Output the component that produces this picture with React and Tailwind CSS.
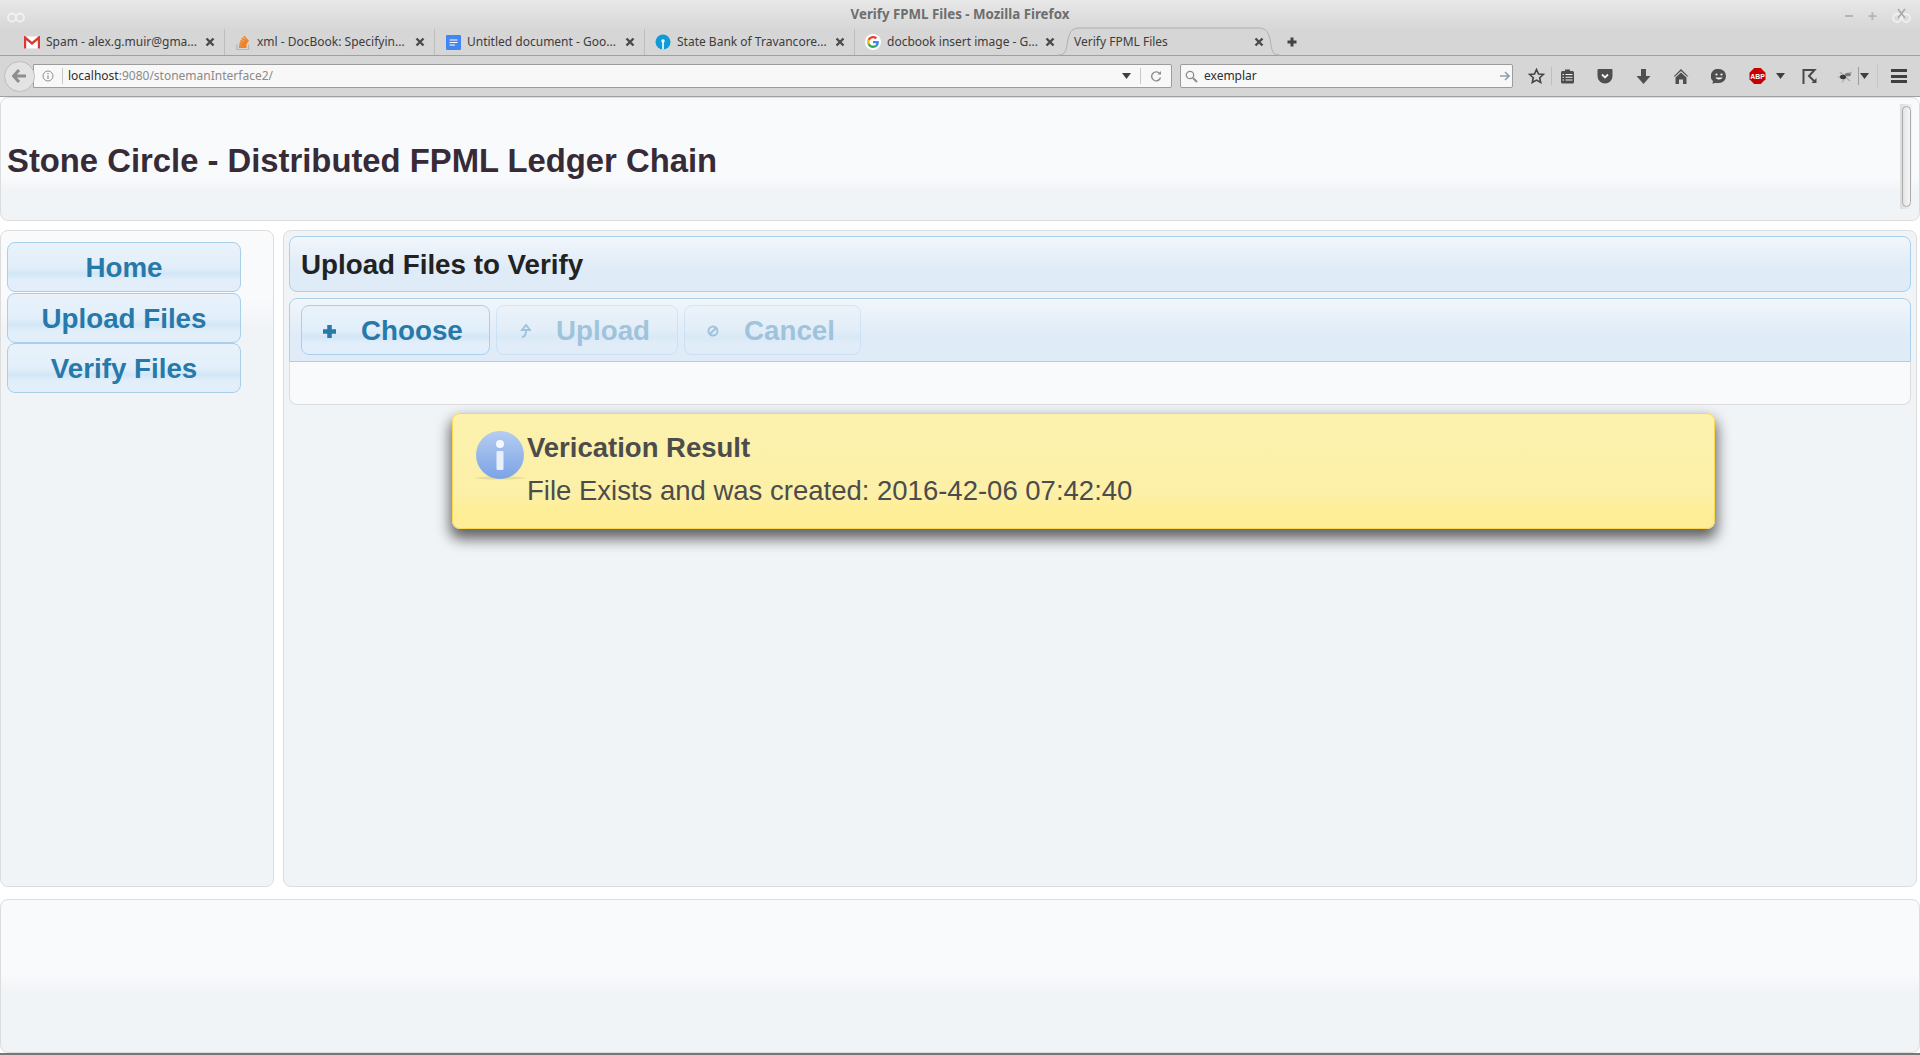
import React from 'react';

const sans = 'font-["Liberation_Sans",Arial,sans-serif]';
const ui = 'font-["Noto_Sans","Open_Sans",sans-serif]';
const btnBg = 'bg-[linear-gradient(to_bottom,#e9f2fa_0%,#e2effa_50%,#d2e6f6_64%,#e2effa_78%,#e2effa_100%)]';
const barBg = 'bg-[linear-gradient(to_bottom,#f1f6fb_0%,#dfebf7_60%,#dfebf7_100%)]';

const X = () => (
  <svg width="10" height="10" viewBox="0 0 10 10" className="shrink-0">
    <path d="M1.5 1.5 L8.5 8.5 M8.5 1.5 L1.5 8.5" stroke="#4a4a4a" strokeWidth="2.4" />
  </svg>
);

const GmailIcon = () => (
  <svg width="16" height="13" viewBox="0 0 16 13">
    <rect x="0.5" y="0.5" width="15" height="12" fill="#fff" stroke="#e8e8e8" />
    <path d="M1 12.5V1.5L8 7.5L15 1.5V12.5" fill="none" stroke="#d93a30" strokeWidth="2.4" />
  </svg>
);

const StackIcon = () => (
  <svg width="14" height="16" viewBox="0 0 14 16">
    <path d="M1 10.500v5h11.500v-5" fill="none" stroke="#b4b4b4" strokeWidth="1.200" />
    <path d="M3 13.200h7.500M3.200 11.200l7.300.5M3.600 8.800l7 1.500M4.400 6.400l6.600 3M5.800 4.200l5.800 4.200M7.800 2.200l4.600 5.400" stroke="#f48024" strokeWidth="1.700" />
  </svg>
);

const DocsIcon = () => (
  <svg width="15" height="15" viewBox="0 0 15 15">
    <rect width="15" height="15" rx="1" fill="#4285f4" />
    <path d="M3.500 5h8M3.500 7.500h8M3.500 10h5.500" stroke="#fff" strokeWidth="1" />
  </svg>
);

const SbiIcon = () => (
  <svg width="16" height="16" viewBox="0 0 16 16">
    <circle cx="8" cy="8" r="7.500" fill="#0f9bd7" />
    <circle cx="8" cy="7" r="1.700" fill="#fff" />
    <rect x="7.200" y="8" width="1.600" height="7.500" fill="#fff" />
  </svg>
);

const GoogleIcon = () => (
  <svg width="16" height="16" viewBox="0 0 48 48">
    <circle cx="24" cy="24" r="24" fill="#fff" />
    <path fill="#ea4335" d="M24 13c3 0 5.400 1 7.300 2.800l5.200-5.200C33.200 7.600 29 6 24 6 17 6 11 10 8 15.800l6.100 4.700C15.500 16.200 19.400 13 24 13z" />
    <path fill="#4285f4" d="M41.600 24.600c0-1.300-.1-2.500-.3-3.600H24v6.900h9.900c-.4 2.300-1.700 4.200-3.700 5.500l5.900 4.600c3.500-3.200 5.500-7.900 5.500-13.400z" />
    <path fill="#fbbc05" d="M14.100 27.500c-.4-1.100-.6-2.300-.6-3.500s.2-2.400.6-3.500L8 15.800C6.700 18.300 6 21 6 24s.7 5.700 2 8.200l6.100-4.700z" />
    <path fill="#34a853" d="M24 42c4.900 0 9-1.600 12.100-4.400l-5.900-4.600c-1.600 1.100-3.700 1.800-6.200 1.800-4.600 0-8.500-3.100-9.900-7.300L8 32.200C11 38 17 42 24 42z" />
  </svg>
);

const tabs = [
  { icon: <GmailIcon />, label: 'Spam - alex.g.muir@gma...' },
  { icon: <StackIcon />, label: 'xml - DocBook: Specifyin...' },
  { icon: <DocsIcon />, label: 'Untitled document - Goo...' },
  { icon: <SbiIcon />, label: 'State Bank of Travancore...' },
  { icon: <GoogleIcon />, label: 'docbook insert image - G...' },
];

const Tab = ({ icon, label, first }) => (
  <div className={`flex items-center h-[26px] pr-[9px] gap-[6px] shrink-0 ${first ? 'w-[224px] pl-[24px]' : 'w-[210px] pl-[10px] border-l border-[#bdbdbd]'}`}>
    <span className="w-[16px] flex justify-center shrink-0">{icon}</span>
    <span className="flex-1 text-[12px] text-[#3c3c3c] whitespace-nowrap">{label}</span>
    <X />
  </div>
);

const TitleBar = () => (
  <div className="relative h-[28px] flex items-center justify-center">
    <svg width="18" height="11" viewBox="0 0 18 11" className="absolute left-[7px] top-[12px]">
      <circle cx="5" cy="5.500" r="4" fill="none" stroke="#f2f2f2" strokeWidth="1.800" />
      <circle cx="13" cy="5.500" r="4" fill="none" stroke="#f2f2f2" strokeWidth="1.800" />
    </svg>
    <span className="text-[13.300px] font-bold text-[#6e6e6e] mt-[2px]">Verify FPML Files - Mozilla Firefox</span>
    <div className="absolute right-[9px] top-[8px] flex items-center gap-[15px] text-[#b5b5b5]">
      <span className="w-[8px] h-[2px] bg-[#b5b5b5]" />
      <span className="text-[16px] font-bold leading-[14px]">+</span>
      <svg width="19" height="16" viewBox="0 0 19 16">
        <circle cx="5" cy="10" r="4" fill="none" stroke="#f0f0f0" strokeWidth="1.800" />
        <circle cx="14" cy="10" r="4" fill="none" stroke="#f0f0f0" strokeWidth="1.800" />
        <path d="M6 1l7 9M13 1l-7 9" stroke="#a8a8a8" strokeWidth="1.500" />
      </svg>
    </div>
  </div>
);

const TabStrip = () => (
  <div className="relative h-[28px] flex items-start pt-[1px] border-b border-[#a0a0a0]">
    {tabs.map((t, i) => <Tab key={t.label} {...t} first={i === 0} />)}
    <div className="relative h-[29px] w-[222px] -mt-[2px] -ml-[6px] flex items-center pl-[16px] pr-[16px] shrink-0">
      <svg width="222" height="29" viewBox="0 0 222 29" className="absolute inset-0">
        <path d="M0 28C8 28 8 24 10 12C12 3 16 1 22 1H200C206 1 210 3 212 12C214 24 214 28 222 28" fill="#d6d6d6" stroke="#b0b0b0" />
      </svg>
      <span className="relative flex-1 text-[12px] text-[#3c3c3c]">Verify FPML Files</span>
      <span className="relative flex"><X /></span>
    </div>
    <svg width="12" height="12" viewBox="0 0 12 12" className="ml-[6px] mt-[7px] shrink-0">
      <path d="M6 1.500v9M1.500 6h9" stroke="#444" strokeWidth="3" />
    </svg>
  </div>
);

const Caret = () => (
  <svg width="9" height="6" viewBox="0 0 9 6" className="shrink-0"><path d="M0 0h9L4.500 6z" fill="#3f3f3f" /></svg>
);

const Toolbar = () => (
  <div className="h-[41px] flex items-center border-b border-[#a0a0a0]">
    <div className="relative z-10 w-[31px] h-[31px] ml-[4px] -mr-[2px] rounded-full bg-[#e3e3e3] border border-[#bcbcbc] flex items-center justify-center shrink-0">
      <svg width="15" height="14" viewBox="0 0 15 14"><path d="M7 1L1.500 7 7 13M2 7h12" fill="none" stroke="#8e8e8e" strokeWidth="3" /></svg>
    </div>
    <div className="w-[1139px] h-[24px] flex items-center bg-[#f8f8f8] border border-[#9c9c9c] rounded-r-[2px] pl-[8px] shrink-0">
      <svg width="12" height="12" viewBox="0 0 12 12" className="shrink-0">
        <circle cx="6" cy="6" r="5" fill="none" stroke="#8f8f8f" />
        <path d="M6 5.500v3.500M6 3v1.300" stroke="#8f8f8f" strokeWidth="1.200" />
      </svg>
      <span className="w-px h-[16px] bg-[#c8c8c8] ml-[8px] mr-[5px]" />
      <span className="flex-1 text-[12px] text-[#8a8a8a]"><span className="text-[#2e2e2e]">localhost</span>:9080/stonemanInterface2/</span>
      <Caret />
      <span className="w-px h-[16px] bg-[#c8c8c8] ml-[9px] mr-[9px]" />
      <svg width="12" height="12" viewBox="0 0 12 12" className="mr-[9px]">
        <path d="M10 4A4.500 4.500 0 1 0 10.500 7.500" fill="none" stroke="#8d8d8d" strokeWidth="1.400" />
        <path d="M7.500 4.500h3.500V1z" fill="#8d8d8d" />
      </svg>
    </div>
    <div className="w-[333px] h-[24px] ml-[8px] flex items-center bg-[#f8f8f8] border border-[#9c9c9c] rounded-[2px] pl-[4px] pr-[2px] shrink-0">
      <svg width="13" height="13" viewBox="0 0 13 13" className="shrink-0">
        <circle cx="5" cy="5" r="3.700" fill="none" stroke="#8d8d8d" strokeWidth="1.300" />
        <path d="M8 8l4 4" stroke="#8d8d8d" strokeWidth="2" />
      </svg>
      <span className="flex-1 text-[12px] text-[#2e2e2e] ml-[6px]">exemplar</span>
      <svg width="10" height="10" viewBox="0 0 10 10"><path d="M0 5h8M5 1l4 4-4 4" fill="none" stroke="#90a0b2" strokeWidth="1.600" /></svg>
    </div>
    {/* toolbar buttons */}
    <svg width="17" height="16" viewBox="0 0 16 16" className="ml-[15px] shrink-0">
      <path d="M8 1.500l2 4.500 4.800.5-3.600 3.200 1 4.800L8 12.100 3.800 14.500l1-4.800L1.200 6.500 6 6z" fill="none" stroke="#444" strokeWidth="1.600" />
    </svg>
    <span className="w-px h-[18px] bg-[#bdbdbd] ml-[6px] mr-[8px] shrink-0" />
    <svg width="15" height="15" viewBox="0 0 14 15" className="shrink-0">
      <rect x="0.500" y="2" width="13" height="12.500" rx="1.500" fill="#4c4c4c" />
      <rect x="4.500" y="0.500" width="5" height="3" fill="#4c4c4c" />
      <path d="M2 5.500h1.500M5 5.500h7M2 8.200h1.500M5 8.200h7M2 11h1.500M5 11h7" stroke="#f0f0f0" strokeWidth="1.100" />
    </svg>
    <svg width="16" height="15" viewBox="0 0 15 15" className="ml-[22px] shrink-0">
      <path d="M1 0h13a1 1 0 0 1 1 1v6a7.500 7.500 0 0 1-15 0V1a1 1 0 0 1 1-1z" fill="#4f4f4f" />
      <path d="M4.500 5.500l3 3 3-3" fill="none" stroke="#f2f2f2" strokeWidth="1.800" />
    </svg>
    <svg width="15" height="15" viewBox="0 0 14 15" className="ml-[23px] shrink-0">
      <path d="M4.500 0h5v7H14l-7 8-7-8h4.500z" fill="#4f4f4f" />
    </svg>
    <svg width="16" height="15" viewBox="0 0 15 15" className="ml-[22px] shrink-0">
      <path d="M7.500 0L15 7.500h-1.500L7.500 2 1.500 7.500H0z" fill="#4f4f4f" />
      <path d="M7.500 3.500L13 8.500V15H9.500v-4.500h-4V15H2V8.500z" fill="#4f4f4f" />
    </svg>
    <svg width="16" height="15" viewBox="0 0 15 15" className="ml-[22px] shrink-0">
      <path d="M7.500 0a7 7 0 0 1 0 14H3l-2 1 .5-3A7 7 0 0 1 7.500 0z" fill="#4f4f4f" />
      <circle cx="5" cy="5.500" r="1.100" fill="#f2f2f2" />
      <circle cx="10" cy="5.500" r="1.100" fill="#f2f2f2" />
      <path d="M3.800 8.500c1.500 2.500 5.900 2.500 7.400 0z" fill="#f2f2f2" />
    </svg>
    <svg width="17" height="16" viewBox="0 0 16 16" className="ml-[22px] shrink-0">
      <path d="M4.700 0h6.600L16 4.700v6.600L11.300 16H4.700L0 11.300V4.700z" fill="#c40000" />
      <text x="8" y="10.500" textAnchor="middle" fill="#fff" fontSize="6.800" fontWeight="700" fontFamily="Liberation Sans">ABP</text>
    </svg>
    <span className="ml-[10px] shrink-0 flex"><Caret /></span>
    <svg width="15" height="15" viewBox="0 0 14 15" className="ml-[17px] shrink-0">
      <path d="M1 15V1h11L6.500 7l6 6" fill="none" stroke="#4a4a4a" strokeWidth="2" />
      <path d="M9 14h5V9z" fill="#4a4a4a" />
    </svg>
    <svg width="16" height="13" viewBox="0 0 16 13" className="ml-[20px] shrink-0">
      <path d="M1 7.500L15 2M5 12.500L11 3M3 2l10 9" stroke="#a8a8a8" strokeWidth="1.100" />
      <ellipse cx="6" cy="7" rx="3" ry="2.200" fill="#3a3a3a" />
      <ellipse cx="11" cy="4.500" rx="3" ry="1.800" fill="#7a7a7a" />
    </svg>
    <span className="w-px h-[18px] bg-[#9e9e9e] ml-[5px] mr-[1px] shrink-0" />
    <Caret />
    <span className="w-px h-[26px] bg-[#c6c6c6] ml-[8px] mr-[13px] shrink-0" />
    <div className="flex flex-col gap-[2.500px] shrink-0">
      <span className="w-[16px] h-[3px] bg-[#3f3f3f]" />
      <span className="w-[16px] h-[3px] bg-[#3f3f3f]" />
      <span className="w-[16px] h-[3px] bg-[#3f3f3f]" />
    </div>
  </div>
);

const SideButton = ({ children }) => (
  <div className={`h-[50px] pt-[2px] flex items-center justify-center border border-[#a8cfec] rounded-[8px] ${btnBg} text-[27.750px] font-bold text-[#2779aa]`}>
    {children}
  </div>
);

const ToolButton = ({ icon, label, w, disabled }) => (
  <div className={`${w} h-[50px] pt-[2px] flex items-center pl-[20px] border border-[#a8cfec] rounded-[8px] ${btnBg} text-[27.750px] font-bold text-[#2779aa] ${disabled ? 'opacity-35' : ''}`}>
    <span className="w-[15px] flex justify-center">{icon}</span>
    <span className="ml-[24px]">{label}</span>
  </div>
);

export default function App() {
  return (
    <div className="h-[1055px] w-[1920px] flex flex-col overflow-hidden bg-white">
      <div className={`${ui} bg-[linear-gradient(to_bottom,#e8e8e8_0px,#d6d6d6_30px,#d6d6d6_100%)]`}>
        <TitleBar />
        <TabStrip />
        <Toolbar />
      </div>

      <div className={`${sans} flex-1 flex flex-col relative min-h-0`}>
        <header className="h-[124px] mb-[9px] flex items-center justify-between pl-[6px] pr-[7px] border border-[#dddddd] rounded-[8px] bg-[linear-gradient(to_bottom,#f9fafc_0%,#f9fafc_64%,#f1f4f7_77%,#f1f4f7_100%)]">
          <h1 className="text-[32.800px] font-bold text-[#362b36] pt-[4px]">Stone Circle - Distributed FPML Ledger Chain</h1>
          <div className="w-[12px] h-[105px] mb-[5px] bg-[linear-gradient(to_right,#dcdcdc,#f4f4f4)] flex justify-center py-[2px]">
            <div className="w-[9px] h-full bg-[linear-gradient(to_right,#e4e4e4,#f6f6f6)] border border-[#a9a9a9] rounded-[5px]" />
          </div>
        </header>

        <div className="flex-1 flex gap-[9px] min-h-0">
          <aside className="w-[274px] pt-[11px] pl-[6px] border border-[#dddddd] rounded-[8px] bg-[linear-gradient(to_bottom,#f9fafc_0%,#f9fafc_10%,#f1f4f7_15%,#f1f4f7_100%)]">
            <nav className="w-[234px] flex flex-col gap-[0.500px]">
              <SideButton>Home</SideButton>
              <SideButton>Upload Files</SideButton>
              <SideButton>Verify Files</SideButton>
            </nav>
          </aside>

          <main className="flex-1 mr-[3px] pt-[5px] px-[5px] border border-[#dddddd] rounded-[8px] bg-[#f1f4f7]">
            <div className={`h-[56px] mb-[6px] pt-[2px] flex items-center pl-[11px] border border-[#a8cfec] rounded-[8px] ${barBg}`}>
              <h2 className="text-[27.750px] font-bold text-[#222222]">Upload Files to Verify</h2>
            </div>
            <div className="h-[107px] flex flex-col">
              <div className={`h-[64px] flex items-center gap-[6px] pl-[11px] border border-[#a8cfec] rounded-t-[8px] shrink-0 ${barBg}`}>
                <ToolButton
                  w="w-[189px]"
                  label="Choose"
                  icon={<svg width="15" height="15" viewBox="0 0 15 15"><path d="M7.500 1v13M1 7.500h13" stroke="#2779aa" strokeWidth="4.500" /></svg>}
                />
                <ToolButton
                  w="w-[182px]"
                  label="Upload"
                  disabled
                  icon={<svg width="12" height="14" viewBox="0 0 12 14"><path d="M3 13c3 0 4-2 4-7M3 6l4-5 4 5z" fill="none" stroke="#2779aa" strokeWidth="2" /></svg>}
                />
                <ToolButton
                  w="w-[177px]"
                  label="Cancel"
                  disabled
                  icon={<svg width="12" height="12" viewBox="0 0 12 12"><circle cx="6" cy="6" r="4.500" fill="none" stroke="#2779aa" strokeWidth="2" /><path d="M3 9l6-6" stroke="#2779aa" strokeWidth="2" /></svg>}
                />
              </div>
              <div className="flex-1 border-x border-b border-[#dddddd] rounded-b-[8px] bg-[#f9fafc]" />
            </div>
          </main>

          {/* growl message sits over the content panel */}
          <div className="absolute left-[452px] top-[316px] w-[1263px] h-[116px] flex pl-[23px] pt-[17px] border border-[#fbd850] rounded-[8px] bg-[linear-gradient(to_bottom,#fcf2ae_0%,#fcf0a8_70%,#feee98_82%,#feee98_100%)] shadow-[0_8px_14px_2px_rgba(0,0,0,0.6)] text-[#4c4c4c]">
            <svg width="50" height="50" viewBox="0 0 50 50" className="shrink-0">
              <defs>
                <linearGradient id="infoFill" x1="0" y1="0" x2="0" y2="1">
                  <stop offset="0" stopColor="#b5cdf0" />
                  <stop offset="1" stopColor="#7ba3e6" />
                </linearGradient>
              </defs>
              <ellipse cx="24" cy="47" rx="25" ry="1.500" fill="#e8dd98" />
              <circle cx="24" cy="24" r="24" fill="url(#infoFill)" />
              <circle cx="24" cy="13" r="4" fill="#f4f7fd" />
              <rect x="20.500" y="20" width="7" height="19" rx="1" fill="#e8eefa" />
            </svg>
            <div className="ml-[1px]">
              <div className="text-[27.500px] font-bold leading-[34px]">Verication Result</div>
              <div className="text-[27.500px] leading-[34px] mt-[9px]">File Exists and was created: 2016-42-06 07:42:40</div>
            </div>
          </div>
        </div>

        <footer className="h-[154px] mt-[12px] border border-[#dddddd] rounded-[8px] shrink-0 bg-[linear-gradient(to_bottom,#f9fafc_0%,#f9fafc_48%,#f1f4f7_61%,#f1f4f7_100%)]" />
        <div className="h-[2px] bg-[#777777] shrink-0" />
      </div>
    </div>
  );
}
